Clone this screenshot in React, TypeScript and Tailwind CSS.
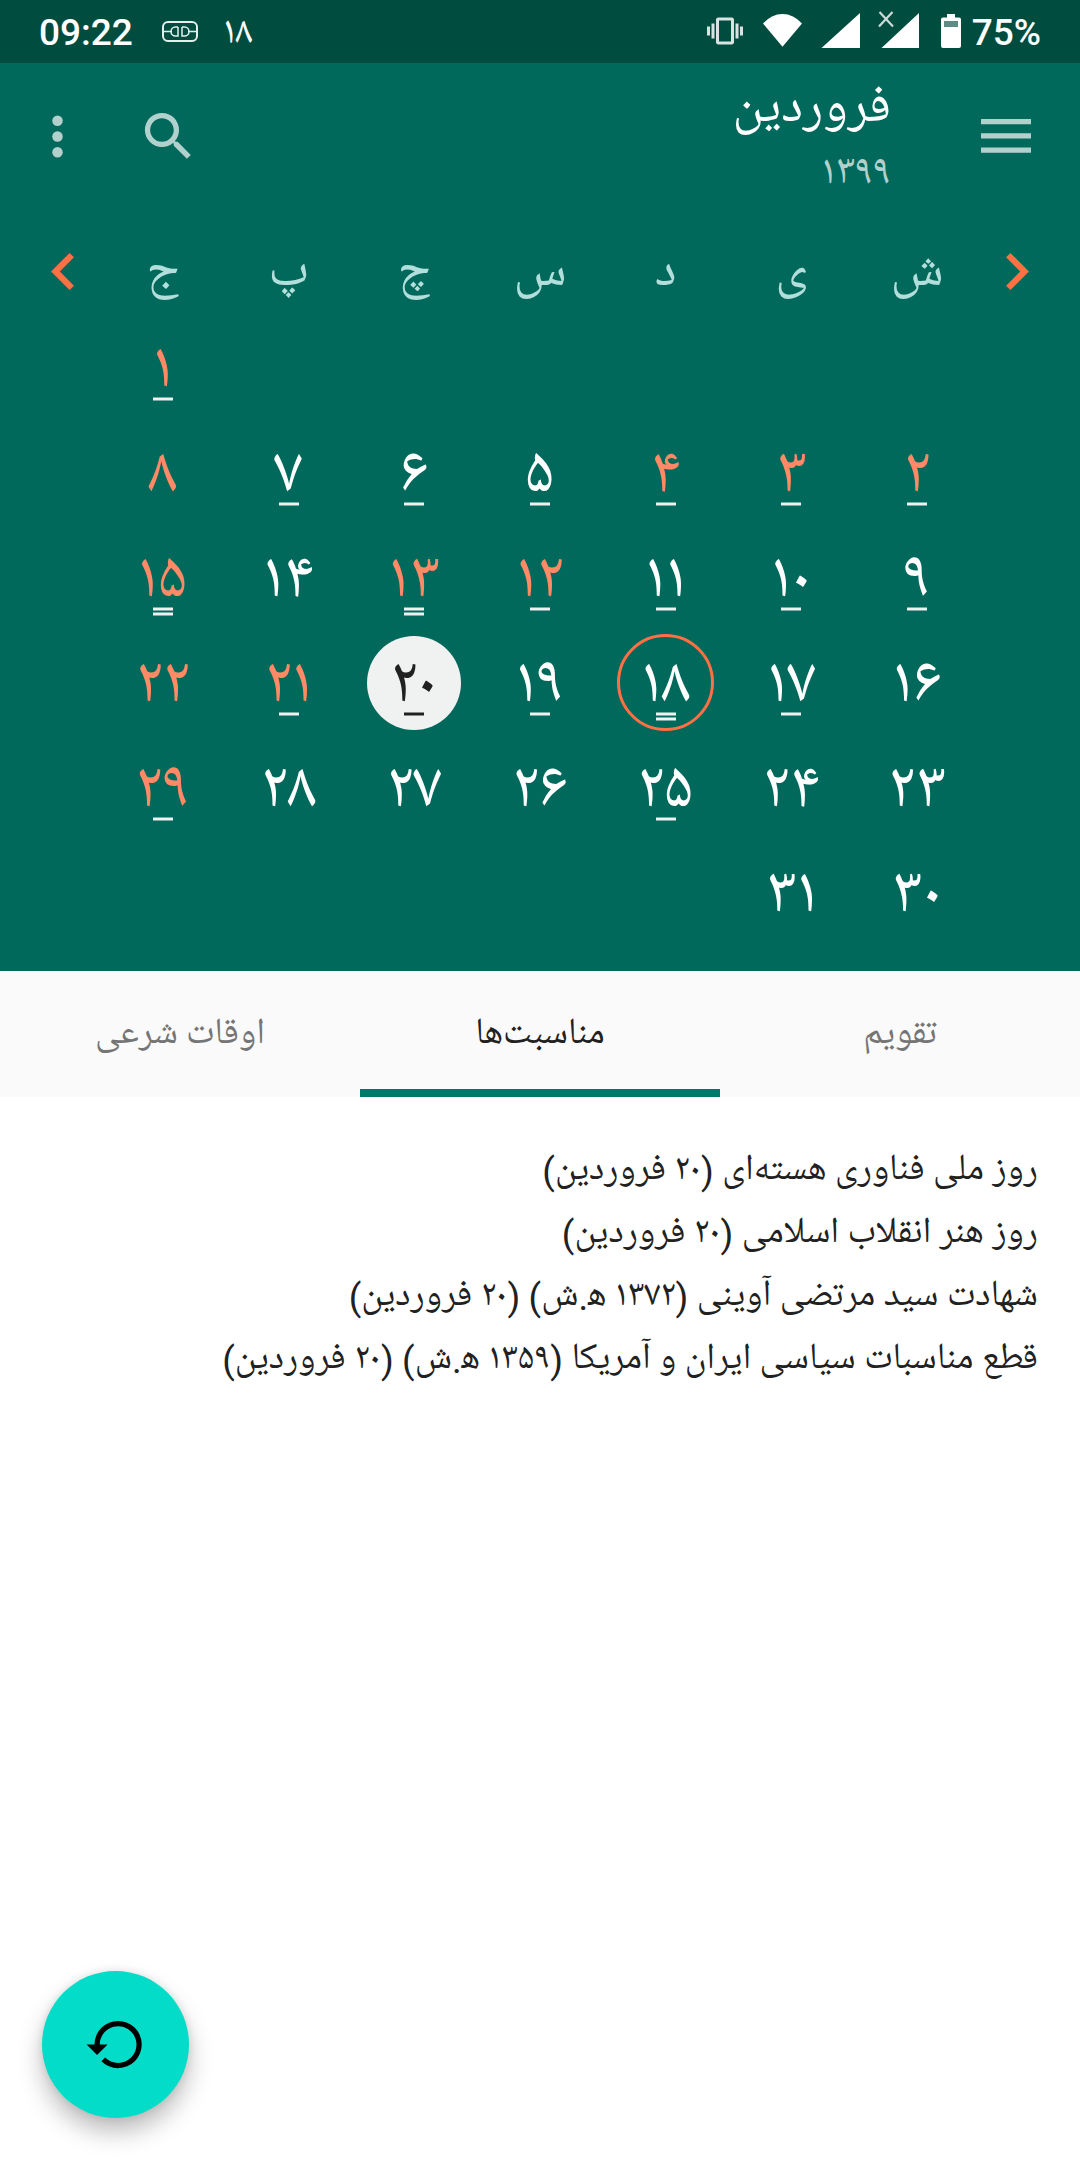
import React from 'react';

type Day = { n: string; holiday?: boolean; marks?: number; today?: boolean; selected?: boolean };

const weekdays = ['ش', 'ی', 'د', 'س', 'چ', 'پ', 'ج'];

const weeks: (Day | null)[][] = [
  [null, null, null, null, null, null, { n: '۱', holiday: true, marks: 1 }],
  [
    { n: '۲', holiday: true, marks: 1 },
    { n: '۳', holiday: true, marks: 1 },
    { n: '۴', holiday: true, marks: 1 },
    { n: '۵', marks: 1 },
    { n: '۶', marks: 1 },
    { n: '۷', marks: 1 },
    { n: '۸', holiday: true },
  ],
  [
    { n: '۹', marks: 1 },
    { n: '۱۰', marks: 1 },
    { n: '۱۱', marks: 1 },
    { n: '۱۲', holiday: true, marks: 1 },
    { n: '۱۳', holiday: true, marks: 2 },
    { n: '۱۴' },
    { n: '۱۵', holiday: true, marks: 2 },
  ],
  [
    { n: '۱۶' },
    { n: '۱۷', marks: 1 },
    { n: '۱۸', marks: 2, today: true },
    { n: '۱۹', marks: 1 },
    { n: '۲۰', marks: 1, selected: true },
    { n: '۲۱', holiday: true, marks: 1 },
    { n: '۲۲', holiday: true },
  ],
  [
    { n: '۲۳' },
    { n: '۲۴' },
    { n: '۲۵', marks: 1 },
    { n: '۲۶' },
    { n: '۲۷' },
    { n: '۲۸' },
    { n: '۲۹', holiday: true, marks: 1 },
  ],
  [{ n: '۳۰' }, { n: '۳۱' }, null, null, null, null, null],
];

const events = [
  'روز ملی فناوری هسته‌ای (۲۰ فروردین)',
  'روز هنر انقلاب اسلامی (۲۰ فروردین)',
  'شهادت سید مرتضی آوینی (۱۳۷۲ ه‍.ش) (۲۰ فروردین)',
  'قطع مناسبات سیاسی ایران و آمریکا (۱۳۵۹ ه‍.ش) (۲۰ فروردین)',
];

function StatusBar() {
  return (
    <div dir="ltr" className="flex h-[63px] items-start bg-[#004d40] text-[37px] font-medium leading-[63px] text-white">
      <span className="ml-[39px] w-[123px] pt-px font-['Roboto',sans-serif]">09:22</span>
      <svg className="mt-[21px] h-[21px] w-9" viewBox="0 0 36 21" fill="none" stroke="#e6eeec" strokeWidth="2">
        <rect x="1" y="1" width="34" height="19" rx="5" />
        <path d="M1 10.500h9M16 6h-2.500a4.500 4.500 0 0 0 0 9H16V6M20 6h2.500a4.500 4.500 0 0 1 0 9H20V6M26 10.500h9" strokeWidth="1.500" />
      </svg>
      <span className="ml-[25px] text-[39px] font-normal leading-[66px]">۱۸</span>
      <div className="ml-auto flex items-start pr-[39px]">
        <svg className="mt-[13px] size-9" viewBox="0 0 24 24" fill="#d9e4e2">
          <path d="M0 15h2V9H0v6zm3 2h2V7H3v10zm19-8v6h2V9h-2zm-3 8h2V7h-2v10zM16.500 3h-9C6.670 3 6 3.670 6 4.500v15c0 .83.67 1.500 1.500 1.500h9c.83 0 1.500-.67 1.500-1.500v-15c0-.83-.67-1.500-1.500-1.500zM16 19H8V5h8v14z" />
        </svg>
        <svg className="ml-5 mt-3.5 h-[33px] w-[39px]" viewBox="0 0 39 33" fill="#fff">
          <path d="M0 9.500Q8.500 0 19.500 0T39 9.500L19.500 32.800Z" />
        </svg>
        <svg className="ml-[19px] mt-[13px] h-[35px] w-10" viewBox="0 0 40 35" fill="#fff">
          <path d="M.500 35L39 0v35Z" />
        </svg>
        <svg className="ml-[17px] mt-[11px] h-[37px] w-[42px]" viewBox="0 0 42 37" fill="#fff">
          <path d="M3.500 37L41 2v35Z" />
          <path d="M1.500 1L15 15.500M14.500 1L1 15.500" stroke="#ccdbd9" strokeWidth="2.200" />
        </svg>
        <svg className="ml-[21px] mt-3.5 h-[34px] w-5" viewBox="0 0 20 34">
          <path d="M6 0h8v3.500h4a2 2 0 0 1 2 2V32a2 2 0 0 1-2 2H2a2 2 0 0 1-2-2V5.500a2 2 0 0 1 2-2h4Z" fill="#fff" />
          <path d="M3 7h14v6H3z" fill="#5c8c83" />
        </svg>
        <span className="ml-[11px] pt-px font-['Roboto',sans-serif]">75%</span>
      </div>
    </div>
  );
}

function AppBar() {
  return (
    <div className="flex h-[147px] items-start text-white">
      <svg className="mr-[49px] mt-14 h-[34px] w-[50px]" viewBox="0 0 50 34" fill="#b2d1cd">
        <path d="M0 0h50v5.300H0zM0 14.300h50v5.300H0zM0 28.500h50v5.300H0z" />
      </svg>
      <div className="mr-[90px] flex flex-col">
        <div className="mt-[10px] h-[70px] text-[52.5px] leading-[70px]">فروردین</div>
        <div className="mt-[2px] h-14 text-[42px] leading-14 text-[#b2d1cd]">۱۳۹۹</div>
      </div>
      <svg className="mr-auto mt-[42px] size-[63px]" viewBox="0 0 24 24" fill="#b2d1cd">
        <path d="M15.500 14h-.79l-.28-.27A6.471 6.471 0 0 0 16 9.500 6.500 6.500 0 1 0 9.500 16c1.610 0 3.090-.59 4.230-1.570l.27.28v.79l5 4.990L20.490 19l-4.990-5zm-6 0C7.010 14 5 11.990 5 9.500S7.010 5 9.500 5 14 7.010 14 9.500 11.990 14 9.500 14z" />
      </svg>
      <svg className="ml-[26px] mr-12 mt-[42px] size-[63px]" viewBox="0 0 24 24" fill="#b2d1cd">
        <circle cx="12" cy="6" r="2" />
        <circle cx="12" cy="12" r="2" />
        <circle cx="12" cy="18" r="2" />
      </svg>
    </div>
  );
}

function DayCell({ day }: { day: Day | null }) {
  if (!day) return <div />;
  const color = day.selected ? 'text-[#212121]' : day.holiday ? 'text-[#ff8a65]' : 'text-white';
  const bar = day.selected ? 'bg-[#212121] border-[#212121]/50' : 'bg-[#eff2f1] border-[#eff2f1]/50';
  return (
    <div className="relative grid h-[105px] place-items-center">
      {day.selected && <div className="absolute size-[94px] rounded-full bg-[#eff2f1]" />}
      {day.today && <div className="absolute size-[97px] rounded-full border-3 border-[#ff7043]" />}
      <span className={`relative pr-px pt-[5px] text-[65.6px] leading-[100px] ${color}`}>{day.n}</span>
      <div className="absolute top-[82px] flex flex-col gap-px">
        {Array.from({ length: day.marks ?? 0 }, (_, i) => (
          <div key={i} className={`h-1 w-5 border-y bg-clip-padding ${bar}`} />
        ))}
      </div>
    </div>
  );
}

function Calendar() {
  return (
    <div className="flex justify-center">
      <svg className="ml-[26px] mt-[43px] h-[37px] w-[23px]" viewBox="0 0 7.41 12" fill="#ff7043">
        <path d="M1.410 0L0 1.410L4.580 6L0 10.590L1.410 12L7.410 6Z" />
      </svg>
      <div className="grid w-[880px] grid-cols-7">
        {weekdays.map((d) => (
          <div key={d} className="h-[105px] pt-[15px] text-center text-[52.5px] leading-[94px] text-[#b2dfdb]">
            {d}
          </div>
        ))}
        {weeks.flat().map((d, i) => (
          <DayCell key={i} day={d} />
        ))}
      </div>
      <svg className="mr-[26px] mt-[43px] h-[37px] w-[23px]" viewBox="0 0 7.41 12" fill="#ff7043">
        <path d="M6 0L7.410 1.410L2.830 6L7.410 10.590L6 12L0 6Z" />
      </svg>
    </div>
  );
}

export default function App() {
  return (
    <div
      dir="rtl"
      lang="fa"
      className="relative flex h-[2160px] w-[1080px] flex-col overflow-hidden bg-white font-['Noto_Naskh_Arabic_UI','Noto_Naskh_Arabic',serif]"
    >
      <StatusBar />
      <div className="h-[908px] bg-[#00695c]">
        <AppBar />
        <Calendar />
      </div>
      <div className="grid h-[126px] grid-cols-3 bg-[#fafafa] text-center text-[36.75px] leading-[126px] text-[#757575]">
        <div>تقویم</div>
        <div className="h-[126px] border-b-8 border-[#00796b] text-[#212121]">مناسبت‌ها</div>
        <div>اوقات شرعی</div>
      </div>
      <div className="px-[42px] pt-[43px] font-['Roboto','Noto_Naskh_Arabic_UI',serif] text-[36.75px] leading-[63px] text-[#212121] [word-spacing:-0.7px]">
        {events.map((e) => (
          <div key={e} className="h-[63px]">{e}</div>
        ))}
      </div>
      <button className="absolute bottom-[42px] left-[42px] grid size-[147px] place-items-center rounded-full bg-[#03dcc8] shadow-[0_14px_24px_rgba(0,0,0,0.26),0_0_8px_rgba(0,0,0,0.1)]">
        <svg className="size-[63px]" viewBox="0 0 24 24">
          <path d="M13 3a9 9 0 0 0-9 9H1l3.890 3.890.07.14L9 12H6c0-3.870 3.130-7 7-7s7 3.130 7 7-3.130 7-7 7c-1.930 0-3.680-.79-4.940-2.060l-1.420 1.420A8.954 8.954 0 0 0 13 21a9 9 0 0 0 0-18z" />
        </svg>
      </button>
    </div>
  );
}
